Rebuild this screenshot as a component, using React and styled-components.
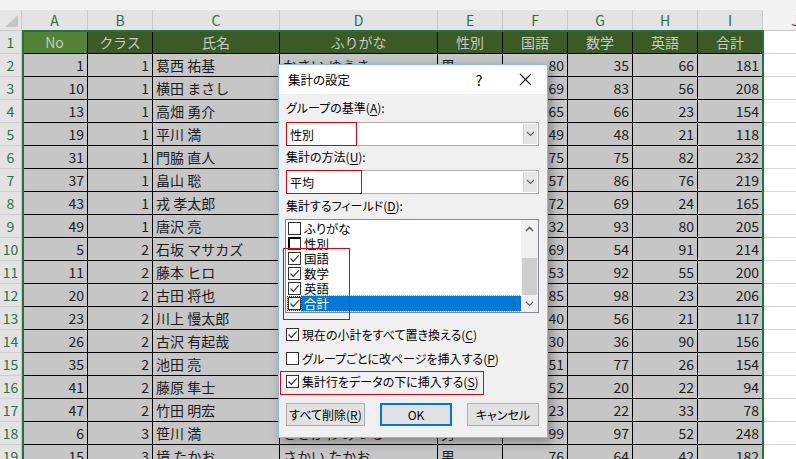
import React from "react";
import styled, { createGlobalStyle, css } from "styled-components";

//global
const GlobalStyle = createGlobalStyle`
  html, body {
    margin: 0;
    padding: 0;
    background: #ffffff;
  }
  body {
    font-family: "Noto Sans CJK JP", "Noto Sans", sans-serif;
    overflow: hidden;
  }
`;

//data
const letters = ["A", "B", "C", "D", "E", "F", "G", "H", "I", "J"];
const heads = ["No", "クラス", "氏名", "ふりがな", "性別", "国語", "数学", "英語", "合計"];
const rows = [
  [1, 1, "葛西 祐基", "かさい ゆうき", "男", 80, 35, 66, 181],
  [10, 1, "横田 まさし", "よこた まさし", "男", 69, 83, 56, 208],
  [13, 1, "高畑 勇介", "たかはた ゆうすけ", "男", 65, 66, 23, 154],
  [19, 1, "平川 満", "ひらかわ みつる", "男", 49, 48, 21, 118],
  [31, 1, "門脇 直人", "かどわき なおと", "男", 75, 75, 82, 232],
  [37, 1, "畠山 聡", "はたけやま さとし", "男", 57, 86, 76, 219],
  [43, 1, "戎 孝太郎", "えびす こうたろう", "男", 72, 69, 24, 165],
  [49, 1, "唐沢 亮", "からさわ りょう", "男", 32, 93, 80, 205],
  [5, 2, "石坂 マサカズ", "いしざか まさかず", "男", 69, 54, 91, 214],
  [11, 2, "藤本 ヒロ", "ふじもと ひろ", "男", 53, 92, 55, 200],
  [20, 2, "古田 将也", "ふるた まさや", "男", 85, 98, 23, 206],
  [23, 2, "川上 慢太郎", "かわかみ しんたろう", "男", 40, 56, 21, 117],
  [26, 2, "古沢 有起哉", "ふるさわ ゆきや", "男", 30, 36, 90, 156],
  [35, 2, "池田 亮", "いけだ りょう", "男", 51, 77, 26, 154],
  [41, 2, "藤原 隼士", "ふじわら はやと", "男", 52, 20, 22, 94],
  [47, 2, "竹田 明宏", "たけだ あきひろ", "男", 23, 22, 33, 78],
  [6, 3, "笹川 満", "ささがわ みつる", "男", 99, 97, 52, 248],
  [15, 3, "境 たかお", "さかい たかお", "男", 76, 64, 42, 182],
];
const fields = [
  { name: "ふりがな", checked: false },
  { name: "性別", checked: false, strong: true },
  { name: "国語", checked: true },
  { name: "数学", checked: true },
  { name: "英語", checked: true },
  { name: "合計", checked: true, selected: true },
];

const COLS = "22px 66px 65px 127px 158px 65px 65px 65px 65px 65px 65px";

function Check() {
  return (
    <svg width="11" height="11" viewBox="0 0 11 11">
      <polyline
        points="1.5,5.5 4.3,8.3 9.8,2.3"
        fill="none"
        stroke="#333"
        strokeWidth="1.2"
      />
    </svg>
  );
}

function Chevron({ up }) {
  return (
    <svg width="9" height="6" viewBox="0 0 9 6">
      <polyline
        points={up ? "1,5 4.5,1.5 8,5" : "1,1 4.5,4.5 8,1"}
        fill="none"
        stroke={up ? "#606060" : "#606060"}
        strokeWidth={up ? "1.6" : "1.1"}
      />
    </svg>
  );
}

function App() {
  return (
    <Page>
      <GlobalStyle />
      <TopBand />
      <HeadRow>
        <Corner />
        {letters.map((l, i) => (
          <ColHead key={l} $on={i < 9}>
            {l}
          </ColHead>
        ))}
      </HeadRow>
      <Row>
        <RowHead>1</RowHead>
        {heads.map((h, i) => (
          <HeadCell key={h} $active={i === 0}>
            {h}
          </HeadCell>
        ))}
        <Blank />
      </Row>
      {rows.map((r, ri) => (
        <Row key={ri}>
          <RowHead>{ri + 2}</RowHead>
          {r.map((v, ci) => (
            <Cell key={ci} $num={typeof v === "number"}>
              {v}
            </Cell>
          ))}
          <Blank />
        </Row>
      ))}
      <SelectionFrame />

      <Dialog>
        <TitleBar>
          <Title>集計の設定</Title>
          <Help>?</Help>
          <Close>
            <svg width="13" height="13" viewBox="0 0 13 13">
              <path d="M1 1 L12 12 M12 1 L1 12" stroke="#111" strokeWidth="1.1" />
            </svg>
          </Close>
        </TitleBar>
        <Body>
          <Label $top={6}>
            グループの基準(<u>A</u>):
          </Label>
          <Combo $top={6}>
            <ComboText>性別</ComboText>
            <DropButton>
              <Chevron />
            </DropButton>
          </Combo>
          <Label $top={3}>
            集計の方法(<u>U</u>):
          </Label>
          <Combo $top={5}>
            <ComboText>平均</ComboText>
            <DropButton>
              <Chevron />
            </DropButton>
          </Combo>
          <Label $top={4}>
            集計するフィールド(<u>D</u>):
          </Label>
          <ListBox>
            <Items>
              {fields.map((f) => (
                <Item key={f.name}>
                  <Box $strong={f.strong} $focus={f.selected}>
                    {f.checked && <Check />}
                  </Box>
                  <ItemText $selected={f.selected}>{f.name}</ItemText>
                </Item>
              ))}
            </Items>
            <ScrollBar>
              <Arrow>
                <Chevron up />
              </Arrow>
              <Track>
                <Thumb />
              </Track>
              <Arrow>
                <Chevron />
              </Arrow>
            </ScrollBar>
          </ListBox>
          <Options>
            <Option>
              <Box>
                <Check />
              </Box>
              <span>
                現在の小計をすべて置き換える(<u>C</u>)
              </span>
            </Option>
            <Option>
              <Box />
              <span>
                グループごとに改ページを挿入する(<u>P</u>)
              </span>
            </Option>
            <Option>
              <Box>
                <Check />
              </Box>
              <span>
                集計行をデータの下に挿入する(<u>S</u>)
              </span>
            </Option>
          </Options>
          <Buttons>
            <Button $w={79}>
              すべて削除(<u>R</u>)
            </Button>
            <Button $w={72} $default>
              OK
            </Button>
            <Button $w={72}>キャンセル</Button>
          </Buttons>
        </Body>
        <Mark $x={7} $y={57} $w={71} $h={24} />
        <Mark $x={7} $y={105} $w={76} $h={24} />
        <Mark $x={4} $y={183} $w={67} $h={72} />
        <Mark $x={1} $y={306} $w={204} $h={24} />
      </Dialog>
    </Page>
  );
}

//sheet styling
const Page = styled.div`
  position: relative;
  width: 796px;
  height: 459px;
  overflow: hidden;
  background: #ffffff;
`;
const TopBand = styled.div`
  height: 10px;
  background: #f3f3f3;
`;
const HeadRow = styled.div`
  display: grid;
  grid-template-columns: ${COLS};
  height: 21px;
  border-bottom: 1px solid #c6c6c6;
  box-sizing: border-box;
`;
const Corner = styled.div`
  position: relative;
  background: #e6e6e6;
  border-right: 1px solid #c9c9c9;
  &::after {
    content: "";
    position: absolute;
    right: 3px;
    bottom: 3px;
    width: 13px;
    height: 12px;
    background: #c4c4c4;
    clip-path: polygon(100% 0, 100% 100%, 0 100%);
  }
`;
const ColHead = styled.div`
  display: flex;
  align-items: center;
  justify-content: center;
  font-family: "Noto Sans CJK JP", sans-serif;
  font-size: 14px;
  background: ${(p) => (p.$on ? "#e3e3e3" : "#f3f3f3")};
  color: ${(p) => (p.$on ? "#2f6f48" : "#444")};
  border-right: 1px solid #c9c9c9;
`;
const Row = styled.div`
  display: grid;
  grid-template-columns: ${COLS};
  height: 23px;
`;
const RowHead = styled.div`
  display: flex;
  align-items: center;
  justify-content: center;
  font-size: 14px;
  background: #e3e3e3;
  color: #2f6f48;
  border-right: 1px solid #c9c9c9;
  border-bottom: 1px solid #cfcfcf;
`;
const cellBase = css`
  display: flex;
  align-items: center;
  box-sizing: border-box;
  font-size: 14px;
  white-space: nowrap;
  overflow: hidden;
  border-right: 1px solid #000;
  border-bottom: 1px solid #000;
`;
const HeadCell = styled.div`
  ${cellBase};
  justify-content: center;
  background: ${(p) => (p.$active ? "#548235" : "#3b5a25")};
  color: #c5cdc0;
`;
const Cell = styled.div`
  ${cellBase};
  justify-content: ${(p) => (p.$num ? "flex-end" : "flex-start")};
  padding: 0 3px 0 3px;
  background: #c6c6c6;
  color: #1c1c1c;
`;
const Blank = styled.div`
  border-right: 1px solid #d4d4d4;
  border-bottom: 1px solid #d4d4d4;
`;
const SelectionFrame = styled.div`
  position: absolute;
  left: 22px;
  top: 30px;
  width: 742px;
  height: 460px;
  box-sizing: border-box;
  border: 2px solid #217346;
  pointer-events: none;
`;

//dialog styling
const Dialog = styled.div`
  position: absolute;
  left: 278px;
  top: 64px;
  width: 270px;
  box-sizing: border-box;
  border: 1px solid #86bdee;
  background: #f0f0f0;
  box-shadow: 3px 4px 10px rgba(0, 0, 0, 0.35);
  font-size: 12px;
  font-feature-settings: "palt";
  color: #000;
`;
const TitleBar = styled.div`
  display: flex;
  align-items: center;
  height: 29px;
  background: #ffffff;
  padding-left: 9px;
`;
const Title = styled.div`
  flex: 1;
  font-size: 12.5px;
`;
const Help = styled.div`
  width: 20px;
  text-align: center;
  font-size: 14px;
  margin-right: 26px;
`;
const Close = styled.div`
  width: 20px;
  display: flex;
  justify-content: center;
  margin-right: 12px;
`;
const Body = styled.div`
  display: flex;
  flex-direction: column;
  padding: 0 8px 11px 7px;
`;
const Label = styled.div`
  margin-top: ${(p) => p.$top}px;
  line-height: 16px;
  height: 16px;
  u {
    text-underline-offset: 2px;
  }
`;
const Combo = styled.div`
  margin-top: ${(p) => p.$top}px;
  display: flex;
  height: 24px;
  box-sizing: border-box;
  border: 1px solid #acacac;
  background: #ffffff;
`;
const ComboText = styled.div`
  flex: 1;
  display: flex;
  align-items: center;
  padding-left: 3px;
`;
const DropButton = styled.div`
  width: 13px;
  margin: 1px;
  display: flex;
  align-items: center;
  justify-content: center;
  background: #e5e5e5;
  border-left: 1px solid #cfcfcf;
`;
const ListBox = styled.div`
  margin: 5px 0 0 -1px;
  height: 94px;
  box-sizing: border-box;
  border: 1px solid #828790;
  background: #ffffff;
  display: flex;
`;
const Items = styled.div`
  flex: 1;
  padding-top: 1px;
`;
const Item = styled.div`
  display: flex;
  align-items: center;
  height: 15px;
  padding-left: 2px;
`;
const Box = styled.div`
  width: 13px;
  height: 13px;
  box-sizing: border-box;
  flex: none;
  display: flex;
  align-items: center;
  justify-content: center;
  background: #ffffff;
  border: 1px solid #333333;
  ${(p) =>
    p.$strong &&
    css`
      border-top: 2px solid #000;
      border-left: 2px solid #000;
    `}
  ${(p) =>
    p.$focus &&
    css`
      outline: 1px dotted #222;
      outline-offset: 0px;
    `}
`;
const ItemText = styled.div`
  flex: 1;
  height: 15px;
  line-height: 15px;
  margin-left: 1px;
  padding-left: 2px;
  font-size: 12.5px;
  background: ${(p) => (p.$selected ? "#0078d7" : "transparent")};
  color: ${(p) => (p.$selected ? "#ffffff" : "#000")};
  outline: ${(p) => (p.$selected ? "1px dotted #f2a33a" : "none")};
`;
const ScrollBar = styled.div`
  width: 17px;
  display: flex;
  flex-direction: column;
  background: #f0f0f0;
`;
const Arrow = styled.div`
  height: 17px;
  display: flex;
  align-items: center;
  justify-content: center;
`;
const Track = styled.div`
  flex: 1;
  display: flex;
  flex-direction: column;
  justify-content: flex-end;
`;
const Thumb = styled.div`
  height: 37px;
  margin: 0 1px;
  background: #cdcdcd;
`;
const Options = styled.div`
  margin-top: 10px;
  display: flex;
  flex-direction: column;
`;
const Option = styled.div`
  display: flex;
  align-items: center;
  gap: 3px;
  height: 23.5px;
  u {
    text-underline-offset: 2px;
  }
`;
const Buttons = styled.div`
  margin-top: 9px;
  display: flex;
  justify-content: space-between;
  padding-left: -1px;
`;
const Button = styled.div`
  width: ${(p) => p.$w}px;
  height: 23px;
  box-sizing: border-box;
  display: flex;
  align-items: center;
  justify-content: center;
  background: #e1e1e1;
  border: ${(p) => (p.$default ? "2px solid #0078d7" : "1px solid #adadad")};
  u {
    text-underline-offset: 2px;
  }
`;
const Mark = styled.div`
  position: absolute;
  left: ${(p) => p.$x}px;
  top: ${(p) => p.$y}px;
  width: ${(p) => p.$w}px;
  height: ${(p) => p.$h}px;
  box-sizing: border-box;
  border: 1px solid #e60000;
  pointer-events: none;
`;

export default App;
